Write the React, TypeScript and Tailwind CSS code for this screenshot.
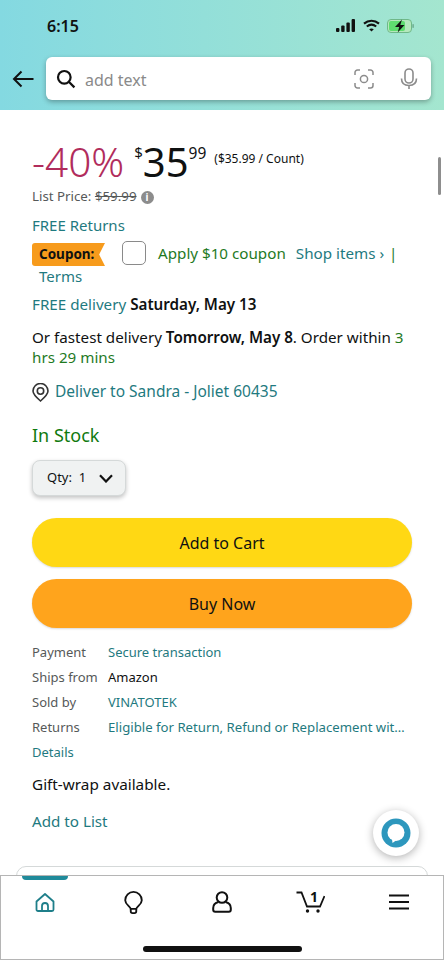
import React from "react";

const teal = "text-[#1f7a80]";

function Row({ label, children }: { label: string; children: React.ReactNode }) {
  return (
    <div className="flex h-[25px] items-center text-[13px]">
      <span className="w-[76px] shrink-0 text-[#565959]">{label}</span>
      {children}
    </div>
  );
}

export default function App() {
  return (
    <div className="relative flex h-[960px] w-[444px] flex-col overflow-hidden bg-white font-['Noto_Sans','Liberation_Sans',sans-serif] text-[#0f1111]">
      <header className="h-[110px] shrink-0 bg-gradient-to-r from-[#84d9e1] to-[#a4e6cf]">
        <div className="flex h-[50px] items-center justify-between pl-[47px] pr-[30px] pt-[1px]">
          <span className="text-[16px] font-semibold text-[#111]">6:15</span>
          <div className="flex items-center gap-[7px]">
            <svg width="20" height="13" viewBox="0 0 20 13" fill="#111">
              <rect x="0" y="9" width="3.4" height="4" rx="1" />
              <rect x="5.2" y="6.5" width="3.4" height="6.5" rx="1" />
              <rect x="10.4" y="3.5" width="3.4" height="9.5" rx="1" />
              <rect x="15.6" y="0" width="3.4" height="13" rx="1" />
            </svg>
            <svg width="17" height="13" viewBox="0 0 17 13" fill="none" stroke="#111" strokeWidth="2.1">
              <path d="M1 4.6C5.4.7 11.6.7 16 4.6" />
              <path d="M3.8 7.5c2.8-2.3 6.6-2.3 9.4 0" />
              <path d="M8.5 12.6 6.2 10.2c1.4-1 3.2-1 4.6 0z" fill="#111" stroke="none" />
            </svg>
            <svg width="27" height="14" viewBox="0 0 27 14">
              <rect x="0.5" y="0.5" width="24" height="13" rx="3.5" fill="#b5e8bd" stroke="#6fb889" />
              <rect x="2" y="2" width="16" height="10" rx="2" fill="#5fdc70" />
              <rect x="25.4" y="5" width="1.4" height="4" rx="0.7" fill="#6aa78a" />
              <path d="M15 0.6 8 8h4.2l-1.5 5.4L17.500 6h-4.200z" fill="#111" />
            </svg>
          </div>
        </div>
        <div className="flex items-center pl-[12px] pr-[13px] pt-[7px]">
          <svg width="23" height="18" viewBox="0 0 23 18" fill="none" stroke="#111" strokeWidth="2" className="mr-[11px] shrink-0">
            <path d="M21.5 9H2M9.5 1.500 2 9l7.500 7.500" />
          </svg>
          <div className="flex h-[43px] flex-1 items-center rounded-[6px] bg-white pl-[10px] pr-[13px] shadow-[0_2px_5px_rgba(0,0,0,0.3)]">
            <svg width="20" height="20" viewBox="0 0 20 20" fill="none" stroke="#111" strokeWidth="2.2">
              <circle cx="8.3" cy="8.3" r="6.3" />
              <path d="m12.8 12.8 5.6 5.6" />
            </svg>
            <span className="ml-[9px] flex-1 pt-[2px] text-[16px] text-[#8a8a8a]">add text</span>
            <svg width="20" height="20" viewBox="0 0 20 20" fill="none" stroke="#8c8c8c" strokeWidth="1.5" className="mr-[26px]">
              <path d="M1 6V3.500A2.500 2.500 0 0 1 3.500 1H6M14 1h2.500A2.500 2.500 0 0 1 19 3.500V6M19 14v2.500a2.500 2.500 0 0 1-2.500 2.500H14M6 19H3.500A2.500 2.500 0 0 1 1 16.500V14" />
              <circle cx="10" cy="10" r="3.600" />
            </svg>
            <svg width="18" height="22" viewBox="0 0 18 22" fill="none" stroke="#8c8c8c" strokeWidth="1.6">
              <rect x="5" y="1" width="8" height="14" rx="4" />
              <path d="M1.500 10.500C1.500 15 4.500 17.500 9 17.500s7.500-2.500 7.500-7M9 17.500V21" />
            </svg>
          </div>
        </div>
      </header>

      <main className="relative flex-1 px-[32px] pt-[29px]">
        <div className="absolute right-[3px] top-[47px] h-[38px] w-[3px] rounded-full bg-[#8e8e8e]" />

        <div className="flex h-[46px] items-start">
          <span className="text-[40.500px] leading-[46px] font-light text-[#b12c5c]">-40%</span>
          <span className="ml-[10px] mt-[5px] text-[15px] leading-[16px]">$</span>
          <span className="text-[40px] leading-[46px]">35</span>
          <span className="mt-[6px] text-[15.500px] leading-[16px]">99</span>
          <span className="ml-[8px] mt-[12px] text-[12px] leading-[16px]">($35.99 / Count)</span>
        </div>

        <div className="mt-[2px] flex h-[20px] items-center text-[13.300px] text-[#565959]">
          List Price:&nbsp;<span className="line-through">$59.99</span>
          <span className="ml-[4px] flex h-[13px] w-[13px] items-center justify-center rounded-full bg-[#8c8c8c] text-[10px] font-bold leading-none text-white">i</span>
        </div>

        <div className={`mt-[7px] h-[22px] text-[15px] leading-[22px] ${teal}`}>FREE Returns</div>

        <div className="mt-[5px] flex h-[24px] items-center text-[15.200px]">
          <span className="mt-[3px] flex h-[23px] w-[73px] shrink-0 items-center rounded-l-[3px] bg-[#f79b1c] pl-[7px] text-[13.500px] font-bold [clip-path:polygon(0_0,100%_0,92%_50%,100%_100%,0_100%)]">Coupon:</span>
          <span className="ml-[17px] -mt-[1px] h-[24px] w-[24px] shrink-0 rounded-[5px] border border-[#8a8a8a] bg-white" />
          <span className="ml-[12px] text-[#1f7a1f]">Apply $10 coupon</span>
          <span className={`ml-[10px] ${teal}`}>Shop items ›</span>
          <span className="ml-[5px] text-[#1f7a1f]">|</span>
        </div>
        <div className={`ml-[7px] h-[22px] text-[15px] leading-[22px] ${teal}`}>Terms</div>

        <div className="mt-[5px] h-[24px] text-[15.200px] leading-[24px]">
          <span className={teal}>FREE delivery</span> <span className="font-semibold">Saturday, May 13</span>
        </div>

        <div className="mt-[11px] text-[15.200px] leading-[20px]">
          <div>
            Or fastest delivery <span className="font-semibold">Tomorrow, May 8</span>. Order within <span className="text-[#1f7a1f]">3</span>
          </div>
          <div className="text-[#1f7a1f]">hrs 29 mins</div>
        </div>

        <div className="mt-[13px] flex h-[24px] items-center gap-[6px] text-[15.500px]">
          <svg width="17" height="19" viewBox="0 0 17 19" fill="none" stroke="#333" strokeWidth="1.6" className="shrink-0">
            <path d="M8.500 18C5 15 1 11.500 1 8a7.500 7.500 0 0 1 15 0c0 3.500-4 7-7.500 10z" />
            <circle cx="8.500" cy="8" r="3.200" />
          </svg>
          <span className={teal}>Deliver to Sandra - Joliet 60435</span>
        </div>

        <div className="mt-[18px] h-[26px] text-[18px] leading-[26px] text-[#0f7a0f]">In Stock</div>

        <div className="mt-[12px] flex h-[36px] w-[94px] items-center rounded-[8px] border border-[#d5d9d9] bg-[#f0f2f2] pl-[14px] text-[13px] shadow-[0_2px_4px_rgba(15,17,17,0.25)]">
          <span>Qty:&nbsp;&nbsp;1</span>
          <svg width="14" height="9" viewBox="0 0 14 9" fill="none" stroke="#111" strokeWidth="2.200" className="ml-[13px]">
            <path d="M1 1.200 7 7.500l6-6.300" />
          </svg>
        </div>

        <div className="mt-[22px] flex h-[49px] w-[380px] items-center justify-center rounded-full bg-[#ffd814] text-[16px] shadow-[0_1px_2px_rgba(0,0,0,0.15)]">Add to Cart</div>
        <div className="mt-[12px] flex h-[49px] w-[380px] items-center justify-center rounded-full bg-[#ffa41c] text-[16px] shadow-[0_1px_2px_rgba(0,0,0,0.15)]">Buy Now</div>

        <div className="mt-[12px]">
          <Row label="Payment"><span className={teal}>Secure transaction</span></Row>
          <Row label="Ships from"><span>Amazon</span></Row>
          <Row label="Sold by"><span className={teal}>VINATOTEK</span></Row>
          <Row label="Returns"><span className={`truncate pr-[4px] text-[13.200px] ${teal}`}>Eligible for Return, Refund or Replacement wit…</span></Row>
          <div className={`flex h-[25px] items-center text-[13px] ${teal}`}>Details</div>
        </div>

        <div className="mt-[7px] h-[24px] text-[15.300px] leading-[24px]">Gift-wrap available.</div>
        <div className={`mt-[13px] h-[24px] text-[15.200px] leading-[24px] ${teal}`}>Add to List</div>

        <div className="absolute right-[25px] top-[700px] flex h-[46px] w-[46px] items-center justify-center rounded-full bg-white shadow-[0_2px_8px_rgba(0,0,0,0.3)]">
          <svg width="30" height="30" viewBox="0 0 30 30">
            <circle cx="15" cy="15" r="14.500" fill="#2d97bd" />
            <circle cx="15" cy="14.500" r="8.500" fill="#fff" />
            <path d="M11 21l.5 4 3.500-2.500z" fill="#fff" />
          </svg>
        </div>
        <div className="absolute left-[16px] right-[16px] top-[756px] h-[20px] rounded-t-[10px] border border-[#d5d9d9]" />
      </main>

      <nav className="absolute bottom-0 left-0 right-0 h-[85px] border border-[#b5b5b5] bg-white">
        <div className="absolute left-[21px] top-0 h-[4px] w-[46px] rounded-b-[4px] bg-[#1f8a9a]" />
        <div className="grid h-[52px] grid-cols-5 items-center justify-items-center">
          <svg width="20" height="19" viewBox="0 0 20 19" fill="none" stroke="#1f7f8a" strokeWidth="1.800" strokeLinejoin="round">
            <path d="M1.500 8.500 10 1l8.500 7.500V16.500a1.500 1.500 0 0 1-1.500 1.500H3a1.500 1.500 0 0 1-1.500-1.500z" />
            <path d="M7 18v-5a3 3 0 0 1 6 0v5" />
          </svg>
          <svg width="19" height="23" viewBox="0 0 20 25" fill="none" stroke="#111" strokeWidth="2">
            <path d="M7 19.500C6.500 16.500 1 15 1 10a9 9 0 0 1 18 0c0 5-5.500 6.500-6 9.500z" />
            <path d="M7 19.500V22a2 2 0 0 0 2 2h2a2 2 0 0 0 2-2v-2.500" />
          </svg>
          <svg width="20" height="22" viewBox="0 0 20 22" fill="none" stroke="#111" strokeWidth="2">
            <circle cx="10" cy="6.500" r="5.300" />
            <path d="M6.500 11C3 11.800 1.200 14 1.200 17v1.800a2 2 0 0 0 2 2h13.600a2 2 0 0 0 2-2V17c0-3-1.800-5.200-5.300-6" />
          </svg>
          <div className="relative h-[22px] w-[29px]">
            <svg width="29" height="22" viewBox="0 0 29 22" fill="none" stroke="#111" strokeWidth="1.800">
              <path d="M.5 1.500H5.500L11 15.500h13L28.500 5" />
              <circle cx="11.500" cy="20" r="1.700" fill="#111" stroke="none" />
              <circle cx="22" cy="20" r="1.700" fill="#111" stroke="none" />
            </svg>
            <span className="absolute left-[14px] -top-[3px] text-[14px] font-bold leading-[18px]">1</span>
          </div>
          <svg width="20" height="16" viewBox="0 0 20 16" fill="none" stroke="#111" strokeWidth="2">
            <path d="M0 1.500h20M0 8h20M0 14.500h20" />
          </svg>
        </div>
        <div className="absolute bottom-[7px] left-[142px] h-[6px] w-[159px] rounded-full bg-[#111]" />
      </nav>
    </div>
  );
}
